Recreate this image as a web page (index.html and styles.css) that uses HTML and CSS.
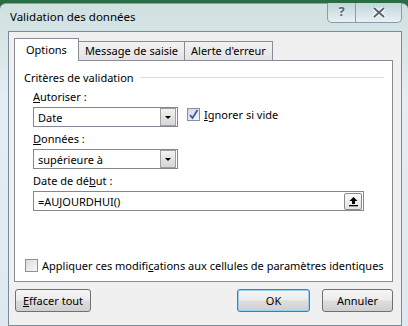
FILE: index.html
```html
<!DOCTYPE html>
<html lang="fr">
<head>
    <meta charset="UTF-8">
    <title>Validation des données</title>
    <link rel="stylesheet" href="styles.css">
</head>
<body>
    <div class="fenetre">
        <div class="titre">
            <span class="titre-texte">Validation des données</span>
            <div class="boutons-titre">
                <span class="btn-aide">?</span>
                <span class="btn-fermer">
                    <svg width="14" height="11" viewBox="0 0 14 11"><path d="M2 1 L12 10 M12 1 L2 10" stroke="#fff" stroke-width="4"/><path d="M2 1 L12 10 M12 1 L2 10" stroke="#5a6470" stroke-width="2"/></svg>
                </span>
            </div>
        </div>
        <div class="client">
            <div class="onglets">
                <div class="onglet actif">Options</div>
                <div class="onglet">Message de saisie</div>
                <div class="onglet">Alerte d'erreur</div>
            </div>
            <div class="panneau">
                <div class="groupe"><span>Critères de validation</span><div class="trait"></div></div>

                <div class="etiquette"><u>A</u>utoriser :</div>
                <div class="ligne">
                    <div class="combo"><span>Date</span><div class="fleche"></div></div>
                    <label class="case coche-ligne"><span class="boite cochee">
                        <svg width="11" height="11" viewBox="0 0 11 11"><path d="M2 6 L4.5 9 L9.5 1" stroke="#3d5a9e" stroke-width="1.8" fill="none"/></svg>
                    </span><span><u>I</u>gnorer si vide</span></label>
                </div>

                <div class="etiquette"><u>D</u>onnées :</div>
                <div class="combo"><span>supérieure à</span><div class="fleche"></div></div>

                <div class="etiquette">Date de dé<u>b</u>ut :</div>
                <div class="saisie">
                    <span>=AUJOURDHUI()</span>
                    <div class="reduire">
                        <svg width="11" height="11" viewBox="0 0 11 11"><path d="M5.5 1 L9.5 5 L7 5 L7 8 L4 8 L4 5 L1.5 5 Z" fill="#000"/><rect x="1" y="9" width="9" height="1.3" fill="#000"/></svg>
                    </div>
                </div>

                <label class="case appliquer"><span class="boite"></span><span>Appliquer ces modifi<u>c</u>ations aux cellules de paramètres identiques</span></label>
            </div>
            <div class="bas">
                <button class="bouton effacer"><u>E</u>ffacer tout</button>
                <div class="droite">
                    <button class="bouton ok">OK</button>
                    <button class="bouton">Annuler</button>
                </div>
            </div>
        </div>
    </div>
</body>
</html>
```

FILE: styles.css
```css
body{
    margin: 0;
    padding: 0;
    width: 408px;
    height: 326px;
    overflow: hidden;
    background: #2b6b45;
    font-family: "Noto Sans", "Open Sans", sans-serif;
    font-size: 11px;
    color: #000;
}
.fenetre{
    margin: 3px 0 0 0;
    height: 323px;
    border-radius: 6px 6px 0 0;
    background: linear-gradient(180deg, #cfe0df 0%, #e4eef3 30%, #dde8f0 100%);
    border-top: 1px solid #8aa2b0;
}
.titre{
    height: 27px;
    display: flex;
    justify-content: space-between;
    align-items: flex-start;
}
.titre-texte{
    padding: 5px 0 0 10px;
    font-size: 11.5px;
}
.boutons-titre{
    display: flex;
    margin-right: 6px;
    margin-top: -1px;
    border: 1px solid #8a9aa6;
    border-top: none;
    border-radius: 0 0 5px 5px;
    height: 19px;
    background: linear-gradient(180deg, #bfd6d8, #e9f0f4);
}
.btn-aide{
    width: 27px;
    border-right: 1px solid #8a9aa6;
    text-align: center;
    font-weight: bold;
    font-size: 13px;
    color: #5a6470;
    line-height: 17px;
    text-shadow: 0 0 2px #fff;
}
.btn-fermer{
    width: 45px;
    display: flex;
    align-items: center;
    justify-content: center;
}
.client{
    margin: 0 6px 0 8px;
    height: 286px;
    background: #f0f0f0;
    border: 1px solid #7a8a99;
    padding: 7px 8px 0 5px;
    display: flex;
    flex-direction: column;
}
.onglets{
    display: flex;
    align-items: flex-end;
    height: 21px;
}
.onglet{
    height: 18px;
    padding: 0 6px;
    line-height: 18px;
    border: 1px solid #898c95;
    border-bottom: none;
    background: linear-gradient(180deg, #f2f2f2, #e3e3e3);
    margin-left: -1px;
}
.onglet.actif{
    line-height: 22px;
    background: #fff;
    margin-left: 0;
    padding: 0 11px;
    position: relative;
    z-index: 1;
    margin-bottom: -1px;
    height: 22px;
}
.panneau{
    height: 220px;
    background: #fff;
    border: 1px solid #898c95;
    padding: 0 0 0 18px;
    display: flex;
    flex-direction: column;
    align-items: flex-start;
}
.groupe{
    display: flex;
    align-items: center;
    width: 360px;
    margin: 8px 0 0 -9px;
    height: 16px;
}
.groupe span{
    white-space: nowrap;
}
.trait{
    flex: 1;
    height: 1px;
    background: #dcdcdc;
    margin-left: 6px;
}
.etiquette{
    height: 16px;
    line-height: 16px;
    margin-top: 4px;
    margin-bottom: 2px;
}
.ligne{
    display: flex;
    align-items: flex-start;
}
.combo{
    height: 18px;
    border: 1px solid #828790;
    display: flex;
    justify-content: space-between;
    align-items: center;
    padding-left: 4px;
    width: 139px;
}
.fleche{
    width: 14px;
    height: 16px;
    margin-right: 1px;
    border: 1px solid #a0a0a0;
    background: linear-gradient(180deg, #f2f2f2, #d6d6d6);
    display: flex;
    align-items: center;
    justify-content: center;
}
.fleche::after{
    content: "";
    border-left: 3px solid transparent;
    border-right: 3px solid transparent;
    border-top: 3px solid #000;
}
.case{
    display: flex;
    align-items: center;
}
.boite{
    width: 11px;
    height: 11px;
    border: 1px solid #8e8f8f;
    background: linear-gradient(135deg, #dcdcdc, #f8f8f8);
    display: flex;
    align-items: center;
    justify-content: center;
    margin-right: 4px;
}
.boite.cochee{
    background: linear-gradient(135deg, #d0d8e8, #f4f6fa);
}
.coche-ligne{
    margin-left: 9px;
}
.saisie{
    width: 325px;
    height: 18px;
    border: 1px solid #828790;
    display: flex;
    justify-content: space-between;
    align-items: center;
    padding-left: 4px;
}
.reduire{
    width: 16px;
    height: 15px;
    margin-right: 1px;
    border: 1px solid #8a8a8a;
    border-radius: 2px;
    background: linear-gradient(180deg, #fafafa, #e2e2e2);
    display: flex;
    align-items: center;
    justify-content: center;
}
.appliquer{
    margin: 47px 0 0 -8px;
    white-space: nowrap;
}
.bas{
    display: flex;
    justify-content: space-between;
    margin-top: 7px;
}
.droite{
    display: flex;
    gap: 12px;
}
.bouton{
    font-family: inherit;
    font-size: 11px;
    height: 23px;
    width: 71px;
    border: 1px solid #707070;
    border-radius: 3px;
    background: linear-gradient(180deg, #f6f6f6 0%, #ebebeb 48%, #dddddd 52%, #cfcfcf 100%);
    padding: 0;
}
.effacer{
    width: 76px;
    margin-left: 1px;
}
.ok{
    width: 73px;
    border-color: #3c7fb1;
    box-shadow: inset 0 0 0 1px #98d1ef;
}
```
